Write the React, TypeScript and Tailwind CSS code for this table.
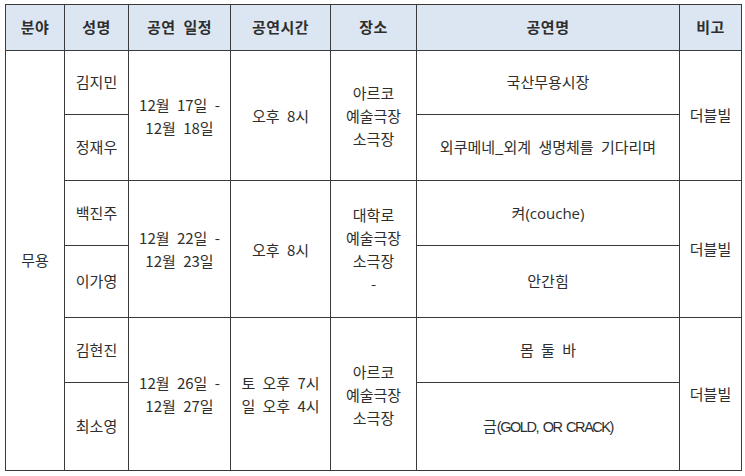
import React from 'react';

const cell = 'border border-[#3a3a3a] text-center align-middle p-0';
const head = 'border border-[#3a3a3a] bg-[#dce6f2] text-center align-middle font-bold p-0 text-[15px] tracking-[0.5px]';

function Lines({ lines }: { lines: string[] }) {
  return (
    <div className="flex flex-col items-center leading-[23px]">
      {lines.map((l, i) => (
        <span key={i}>{l}</span>
      ))}
    </div>
  );
}

type Group = {
  names: [string, string];
  date: string[];
  time: string[];
  venue: string[];
  titles: [React.ReactNode, React.ReactNode];
  heights: [string, string];
};

const GROUPS: Group[] = [
  {
    names: ['김지민', '정재우'],
    date: ['12월 17일 -', '12월 18일'],
    time: ['오후 8시'],
    venue: ['아르코', '예술극장', '소극장'],
    titles: ['국산무용시장', '외쿠메네_외계 생명체를 기다리며'],
    heights: ['h-[64px]', 'h-[66px]'],
  },
  {
    names: ['백진주', '이가영'],
    date: ['12월 22일 -', '12월 23일'],
    time: ['오후 8시'],
    venue: ['대학로', '예술극장', '소극장', '-'],
    titles: [
      <span>
        켜<span className="font-['Open_Sans',sans-serif]">(couche)</span>
      </span>,
      '안간힘',
    ],
    heights: ['h-[65px]', 'h-[72px]'],
  },
  {
    names: ['김현진', '최소영'],
    date: ['12월 26일 -', '12월 27일'],
    time: ['토 오후 7시', '일 오후 4시'],
    venue: ['아르코', '예술극장', '소극장'],
    titles: [
      <span>몸 둘 바</span>,
      <span>
        금<span className="font-['Liberation_Sans_Narrow','Liberation_Sans',sans-serif] tracking-[-0.1em] text-[14.5px] [word-spacing:2px]">(GOLD, OR CRACK)</span>
      </span>,
    ],
    heights: ['h-[65px]', 'h-[88px]'],
  },
];

export default function App() {
  return (
    <div className="w-[745px] h-[476px] bg-white pt-[4px] pl-[5px] font-['Noto_Sans_CJK_KR','Noto_Sans',sans-serif] text-[15px] text-[#2e2e2e] [word-spacing:4px]">
      <table className="table-fixed border-collapse w-[736px]">
        <colgroup>
          <col className="w-[59px]" />
          <col className="w-[64px]" />
          <col className="w-[102px]" />
          <col className="w-[100px]" />
          <col className="w-[86px]" />
          <col className="w-[263px]" />
          <col className="w-[62px]" />
        </colgroup>
        <thead>
          <tr className="h-[46px]">
            <th className={head}>분야</th>
            <th className={head}>성명</th>
            <th className={head}>공연 일정</th>
            <th className={head}>공연시간</th>
            <th className={head}>장소</th>
            <th className={head}>공연명</th>
            <th className={head}>비고</th>
          </tr>
        </thead>
        <tbody>
          {GROUPS.map((g, gi) => (
            <React.Fragment key={g.names[0]}>
              <tr className={g.heights[0]}>
                {gi === 0 && (
                  <td className={cell} rowSpan={6}>
                    무용
                  </td>
                )}
                <td className={cell}>{g.names[0]}</td>
                <td className={cell} rowSpan={2}>
                  <Lines lines={g.date} />
                </td>
                <td className={cell} rowSpan={2}>
                  <Lines lines={g.time} />
                </td>
                <td className={cell} rowSpan={2}>
                  <Lines lines={g.venue} />
                </td>
                <td className={cell}>{g.titles[0]}</td>
                <td className={cell} rowSpan={2}>
                  더블빌
                </td>
              </tr>
              <tr className={g.heights[1]}>
                <td className={cell}>{g.names[1]}</td>
                <td className={cell}>{g.titles[1]}</td>
              </tr>
            </React.Fragment>
          ))}
        </tbody>
      </table>
    </div>
  );
}
